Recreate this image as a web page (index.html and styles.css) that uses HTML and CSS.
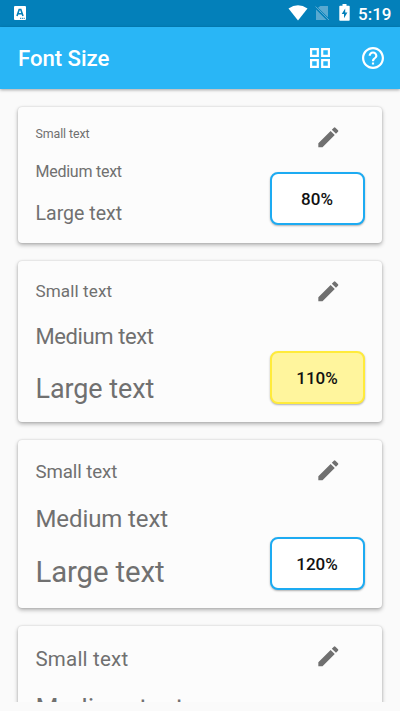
FILE: index.html
```html
<!DOCTYPE html>
<html lang="en">
<head>
<meta charset="utf-8">
<title>Font Size</title>
<link rel="stylesheet" href="styles.css">
</head>
<body>
<div class="status">
  <svg class="app-icon" viewBox="0 0 12 14"><rect width="12" height="14" rx="1" fill="#fff"/><path d="M3 10 5.2 3.5H6.8L9 10M4 7.8H8" fill="none" stroke="#0380ba" stroke-width="1.6"/><path d="M6 12.3H11" stroke="#0380ba" stroke-width="1" stroke-dasharray="1.2 .6"/></svg>
  <svg class="wifi" viewBox="0 0 20 16"><path d="M.5 3.5Q10-3.2 19.5 3.5L10 15.5Z" fill="#fff"/></svg>
  <svg class="sim" viewBox="0 0 15 16"><path d="M5.3 1H13V12.5L3 2.8ZM1 4.5 11.5 15H1Z" fill="#59a9d0"/><path d="M.5 1.5 14 15" stroke="#59a9d0" stroke-width="1"/></svg>
  <svg class="battery" viewBox="0 0 11 17"><path d="M3.5 0H7.5V1.8H10Q10.7 1.8 10.7 2.5V16Q10.7 16.7 10 16.7H1Q.3 16.7.3 16V2.5Q.3 1.8 1 1.8H3.5Z" fill="#fff"/><path d="M6.2 4.5 2.7 10H5V14.2L8.4 8.6H6.2Z" fill="#0380ba"/></svg>
  <span class="clock">5:19</span>
</div>
<header class="bar">
  <h1>Font Size</h1>
  <svg class="grid-icon" viewBox="0 0 20 20"><path d="M1.1 1.1H7.8V7.8H1.1ZM12.2 1.1H18.9V7.8H12.2ZM1.1 12.2H7.8V18.9H1.1ZM12.2 12.2H18.9V18.9H12.2Z" fill="none" stroke="#fff" stroke-width="2.2"/></svg>
  <svg class="help-icon" viewBox="2 2 20 20"><path fill="#fff" d="M11 18h2v-2h-2v2zm1-16C6.480 2 2 6.480 2 12s4.480 10 10 10 10-4.480 10-10S17.520 2 12 2zm0 18c-4.410 0-8-3.590-8-8s3.590-8 8-8 8 3.590 8 8-3.590 8-8 8zm0-14c-2.210 0-4 1.790-4 4h2c0-1.100.9-2 2-2s2 .9 2 2c0 2-3 1.750-3 5h2c0-2.250 3-2.500 3-5 0-2.210-1.790-4-4-4z"/></svg>
</header>
<main class="list">
  <section class="card s80">
    <div class="samples"><p class="small">Small text</p><p class="medium">Medium text</p><p class="large">Large text</p></div>
    <div class="side"><svg class="pencil" viewBox="0 0 24 24"><path d="M3 17.250V21h3.750L17.810 9.940l-3.750-3.750L3 17.250zM20.710 7.040a1 1 0 0 0 0-1.410l-2.340-2.340a1 1 0 0 0-1.410 0l-1.830 1.830 3.750 3.750 1.830-1.830z"/></svg><button>80%</button></div>
  </section>
  <section class="card s110">
    <div class="samples"><p class="small">Small text</p><p class="medium">Medium text</p><p class="large">Large text</p></div>
    <div class="side"><svg class="pencil" viewBox="0 0 24 24"><path d="M3 17.250V21h3.750L17.810 9.940l-3.750-3.750L3 17.250zM20.710 7.040a1 1 0 0 0 0-1.410l-2.340-2.340a1 1 0 0 0-1.410 0l-1.830 1.830 3.750 3.750 1.830-1.830z"/></svg><button class="selected">110%</button></div>
  </section>
  <section class="card s120">
    <div class="samples"><p class="small">Small text</p><p class="medium">Medium text</p><p class="large">Large text</p></div>
    <div class="side"><svg class="pencil" viewBox="0 0 24 24"><path d="M3 17.250V21h3.750L17.810 9.940l-3.750-3.750L3 17.250zM20.710 7.040a1 1 0 0 0 0-1.410l-2.340-2.340a1 1 0 0 0-1.410 0l-1.830 1.830 3.750 3.750 1.830-1.830z"/></svg><button>120%</button></div>
  </section>
  <section class="card s130">
    <div class="samples"><p class="small">Small text</p><p class="medium">Medium text</p></div>
    <div class="side"><svg class="pencil" viewBox="0 0 24 24"><path d="M3 17.250V21h3.750L17.810 9.940l-3.750-3.750L3 17.250zM20.710 7.040a1 1 0 0 0 0-1.410l-2.340-2.340a1 1 0 0 0-1.410 0l-1.830 1.830 3.750 3.750 1.830-1.830z"/></svg></div>
  </section>
</main>
</body>
</html>
```
FILE: styles.css
```css
* { box-sizing: border-box; }
body { margin: 0; height: 711px; overflow: hidden; background: #fafafa; font-family: Roboto, sans-serif; display: flex; flex-direction: column; }
svg { display: block; flex: none; }
.status { height: 27px; flex: none; background: #0380ba; display: flex; align-items: flex-start; padding: 0 9px 0 14px; color: #fff; }
.app-icon { width: 12px; height: 14px; margin-top: 6px; }
.wifi { width: 20px; height: 16px; margin: 5px 0 0 auto; }
.sim { width: 15px; height: 16px; margin: 5px 0 0 7px; }
.battery { width: 11px; height: 17px; margin: 4px 0 0 9px; }
.clock { width: 33px; margin-left: 8px; font-size: 17px; font-weight: 500; line-height: 28px; white-space: nowrap; }
.bar { height: 62px; flex: none; background: #29b6f6; box-shadow: 0 1px 3px rgba(0,0,0,.35); display: flex; align-items: center; padding: 0 16px 0 18px; position: relative; z-index: 1; }
h1 { margin: 0 auto 0 0; color: #fff; font-size: 22.200px; line-height: 30px; font-weight: 500; letter-spacing: -.05px; }
.grid-icon { width: 20px; height: 20px; margin-right: 32px; }
.help-icon { width: 22px; height: 22px; }
.list { height: 613px; flex: none; overflow: hidden; padding: 18px; display: flex; flex-direction: column; gap: 18px; }
.card { flex: none; display: flex; justify-content: space-between; padding: 18px 18px 18px 17.500px; border-radius: 4px; background: #fcfcfc; box-shadow: 0 2px 4px rgba(0,0,0,.3), 0 0 2px rgba(0,0,0,.16); }
.samples { display: flex; flex-direction: column; gap: 20px; color: #707070; white-space: nowrap; }
p { margin: 0; }
.side { width: 94px; display: flex; flex-direction: column; justify-content: space-between; }
.pencil { width: 26.670px; height: 26.670px; margin: -1.300px 0 0 44.700px; fill: #707070; }
button { width: 95px; height: 53px; margin: 0 0 0 -.5px; padding: 1px 0 0; border: 2px solid #1dabf2; border-radius: 8px; background: #fff; box-shadow: 0 1px 2px rgba(0,0,0,.3); color: #111; font: 500 17px Roboto, sans-serif; }
.selected { background: #fff59d; border-color: #ffeb3b; }
.s80 { height: 136px; }
.s80 .small { font-size: 12.400px; line-height: 17.600px; letter-spacing: -.1px; }
.s80 .medium { font-size: 16px; line-height: 17px; letter-spacing: -.25px; }
.s80 .large { font-size: 19.560px; line-height: 27px; }
.s110 { height: 161px; }
.s110 .small { font-size: 17.100px; line-height: 24.400px; letter-spacing: .1px; }
.s110 .medium { font-size: 22px; line-height: 28.200px; letter-spacing: -.4px; }
.s110 .large { font-size: 26.900px; line-height: 34.400px; letter-spacing: -.05px; }
.s120 { height: 168px; }
.s120 .small { font-size: 18.670px; line-height: 28.200px; letter-spacing: -.1px; }
.s120 .medium { font-size: 24px; line-height: 27.200px; letter-spacing: -.1px; }
.s120 .large { font-size: 29.330px; line-height: 39.200px; letter-spacing: -.1px; }
.s130 { height: 177px; }
.s130 .small { font-size: 20.500px; line-height: 30px; letter-spacing: .2px; }
.s130 .medium { font-size: 26.400px; line-height: 28px; letter-spacing: .15px; }
```
